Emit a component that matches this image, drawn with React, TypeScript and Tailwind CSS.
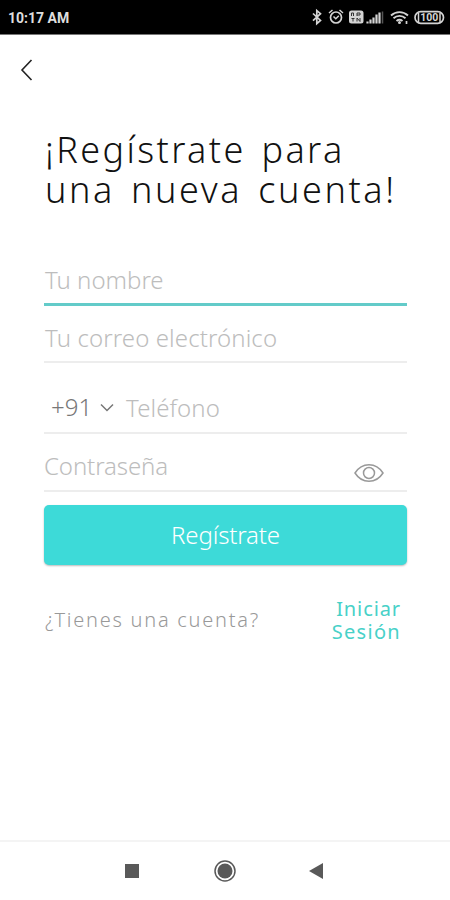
function StatusIcons() {
	return (
		<svg className="mb-[1px]" width="136" height="18" viewBox="0 0 136 18" fill="none" stroke="#d4d4d4" strokeWidth="1.7">
			<path d="M3 5.500l7.500 7-3.700 3.200V2.500l3.700 3.200-7.500 7" />
			<circle cx="26" cy="9.500" r="5.500" />
			<path d="M23.500 8.500l2.300 2.300 3-3M19 5l3.500-3M33 5l-3.500-3" strokeWidth="1.500" />
			<rect x="39" y="2.500" width="14.500" height="13" rx="2.500" fill="#d4d4d4" stroke="none" />
			<path d="M41.500 8V5h2v3M47 8V5h3v2h-3M41.500 10.500h3M47 13.500v-3.500l3 3.500v-3.500M43 10.500v3" stroke="#333" strokeWidth="1" />
			<path d="M57.500 15.500v-2M60.500 15.500v-4M63.500 15.500v-6M66.500 15.500v-9M69.500 15.500v-11" strokeWidth="2.200" />
			<path d="M72.500 15.500V3.500" stroke="#555" strokeWidth="1.500" />
			<path d="M81 7.500c5-4.500 12-4.500 17 0M83.500 10.300c3.500-3.200 8.500-3.200 12 0M86.500 13c2-1.600 4-1.600 6 0" strokeWidth="1.900" />
			<circle cx="89.500" cy="14.500" r="1.500" fill="#d4d4d4" stroke="none" />
			<path d="M96.500 13v3" />
			<rect x="105" y="3.700" width="28.500" height="11.600" rx="5.800" />
			<path d="M108.500 5v9M130 5v9" strokeWidth="1.500" />
			<text x="119.300" y="13.200" textAnchor="middle" className="font-['Roboto'] text-[10.500px] font-bold" fill="#d4d4d4" stroke="none">100</text>
		</svg>
	);
}

export default function App() {
	return (
		<div className="flex h-[900px] w-[450px] flex-col bg-white font-['Noto_Sans',sans-serif] font-light whitespace-nowrap">
			<div className="flex h-[35px] items-center justify-between border-b border-[#777] bg-black pt-[1px] pr-[4px] pl-[8px]">
				<span className="mt-[1px] font-['Roboto',sans-serif] text-[14px] font-bold text-[#dedede]">10:17 AM</span>
				<StatusIcons />
			</div>

			<main className="flex flex-1 flex-col pr-[43px] pl-11">
				<button className="mt-[24px] -ml-[24px] h-[22px] w-[14px]">
					<svg width="14" height="22" viewBox="0 0 14 22" fill="none" stroke="#222" strokeWidth="1.600">
						<path d="M11.500 1L2 11l9.500 10" />
					</svg>
				</button>

				<h1 className="mt-[49px] h-[80px] pl-[1px] text-[36px] leading-[40px] text-[#111]">
					<span className="block tracking-[2.400px] [word-spacing:4px]">¡Regístrate para</span>
					<span className="block tracking-[2.600px] [word-spacing:4px]">una nueva cuenta!</span>
				</h1>

				<div className="mt-[49px] flex h-[47px] items-center border-b-3 border-[#63cbc9] pb-[2px] pl-[1px] text-[24px] leading-[40px] text-[#bdbdbd]">
					Tu nombre
				</div>
				<div className="flex h-[57px] items-center border-b-2 border-[#ededed] pt-[8px] pl-[1px] text-[24px] leading-[40px] tracking-[0.100px] text-[#bdbdbd]">
					Tu correo electrónico
				</div>
				<div className="flex h-[71px] items-center border-b-2 border-[#ededed] pt-[20px] text-[24px] leading-[40px] text-[#bdbdbd]">
					<span className="mb-[2px] ml-[7px] w-[42px] text-[#777]">+91</span>
					<svg className="mr-[12px] ml-[7px]" width="14" height="9" viewBox="0 0 14 9" fill="none" stroke="#777" strokeWidth="1.500">
						<path d="M1 1.500l6 6 6-6" />
					</svg>
					<span className="tracking-[0.100px]">Teléfono</span>
				</div>
				<div className="flex h-[58px] items-center justify-between border-b-2 border-[#ededed] pt-[8px] pr-[23px] text-[24px] leading-[40px] text-[#bdbdbd]">
					<span className="tracking-[-0.100px]">Contraseña</span>
					<svg className="mt-[14px]" width="30" height="20" viewBox="0 0 30 20" fill="none" stroke="#999" strokeWidth="1.500">
						<path d="M1 10c7-11 21-11 28 0-7 11-21 11-28 0z" />
						<circle cx="15" cy="10" r="5.500" />
					</svg>
				</div>

				<button className="mt-[13px] h-[60px] rounded-[5px] bg-[#3ddad8] text-[24px] tracking-[-0.150px] text-white shadow-[0_1px_2px_#bbb]">
					Regístrate
				</button>

				<div className="mt-[32px] flex items-center justify-between pr-[7px]">
					<span className="pl-[1px] text-[20px] tracking-[1.750px] text-[#999]">¿Tienes una cuenta?</span>
					<a href="#" className="-mr-[1px] text-right text-[20px] leading-[23px] font-normal text-[#48d1c8]">
						<span className="block tracking-[0.900px]">Iniciar</span>
						<span className="block tracking-[1.300px]">Sesión</span>
					</a>
				</div>
			</main>

			<nav className="flex h-[60px] items-center border-t-2 border-[#f4f4f4] pl-[124px] text-[#595959]">
				<svg width="204" height="24" viewBox="0 0 204 24" fill="currentColor">
					<path d="M1 5h14v14H1zM199 4v16l-14-8z" />
					<circle cx="101" cy="12" r="10" fill="none" stroke="currentColor" strokeWidth="1.500" />
					<circle cx="101" cy="12" r="7.500" />
				</svg>
			</nav>
		</div>
	);
}
